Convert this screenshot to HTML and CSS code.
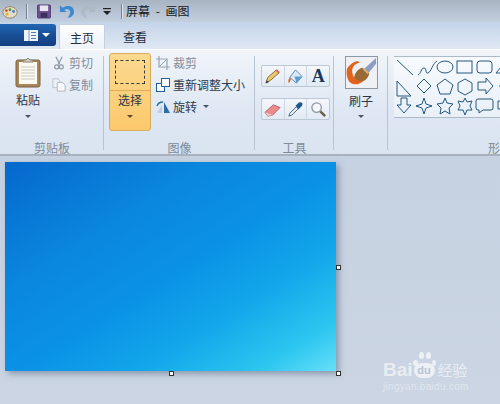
FILE: index.html
```html
<!DOCTYPE html>
<html lang="zh">
<head>
<meta charset="utf-8">
<title>屏幕 - 画图</title>
<link rel="stylesheet" href="styles.css">
</head>
<body>
<div class="app">
  <header class="titlebar">
    <svg class="qa palette" viewBox="0 0 18 16"><ellipse cx="9" cy="9" rx="8" ry="6.500" fill="#e6dcc4" stroke="#8b7d62"/><circle cx="5" cy="7" r="1.600" fill="#d8503c"/><circle cx="9" cy="6" r="1.600" fill="#4a9a4a"/><circle cx="13" cy="8" r="1.600" fill="#3f7fd0"/><circle cx="5.500" cy="11" r="1.600" fill="#e0b030"/></svg>
    <span class="qsep"></span>
    <svg class="qa save" viewBox="0 0 15 15"><rect x=".5" y=".5" width="14" height="14" rx="1" fill="#6a4f8e" stroke="#54407a"/><rect x="3" y="1" width="9" height="6" fill="#e9e6f0"/><rect x="4" y="9" width="7" height="5" fill="#3b2f5c"/></svg>
    <svg class="qa undo" viewBox="0 0 16 16"><path d="M1 2v7h7L5.800 6.800C8 5 12 6 12 9c0 2-1 4-3 6 4 .5 7-2.500 7-6.500C16 3 9.500 .8 4 4.500z" fill="#3a8ad0"/></svg>
    <svg class="qa redo" viewBox="0 0 16 16"><path d="M15 2v7H8l2.200-2.200C8 5 4 6 4 9c0 2 1 4 3 6-4 .5-7-2.500-7-6.500C0 3 6.500 .8 12 4.500z" fill="#aeb9c5"/></svg>
    <svg class="qa more" viewBox="0 0 8 7"><rect y="0" width="8" height="1.200" fill="#222"/><path d="M0 3h8L4 7z" fill="#222"/></svg>
    <span class="qsep second"></span>
    <span class="wintitle">屏幕 - 画图</span>
  </header>

  <nav class="tabs">
    <div class="filebtn">
      <svg class="fileicon" viewBox="0 0 14 11"><rect width="14" height="11" fill="#eef3fa"/><path d="M5 0v11" stroke="#7f9cc0"/><path d="M7 2.500h5M7 5.500h5M7 8.500h5" stroke="#5a7ba8"/></svg>
      <span class="filecaret"></span>
    </div>
    <div class="tab active">主页</div>
    <div class="tab">查看</div>
  </nav>

  <section class="ribbon">
    <div class="group g-clip">
      <div class="group-body clip-body">
        <div class="bigtool paste">
          <svg class="paste-icon" viewBox="0 0 26 31"><rect x="1" y="3" width="24" height="27" rx="2" fill="#a9865c" stroke="#7b5e3c"/><rect x="4" y="5" width="18" height="22" fill="#fbfaf2"/><path d="M6 10h14M6 13h14M6 16h14M6 19h14M6 22h14" stroke="#c8c8bc"/><path d="M8 5V3h3l2-2 2 2h3v2z" fill="#d6d2c4" stroke="#88806c"/></svg>
          <span class="biglabel">粘贴</span>
          <span class="caret"></span>
        </div>
        <div class="smalls">
          <div class="small muted">
            <svg class="ico" viewBox="0 0 14 18"><path d="M3 1l5 10M11 1L6 11" stroke="#8e98a6" stroke-width="1.600" fill="none"/><circle cx="4" cy="14" r="2.500" fill="none" stroke="#8e98a6" stroke-width="1.500"/><circle cx="10" cy="14" r="2.500" fill="none" stroke="#8e98a6" stroke-width="1.500"/></svg>
            <span>剪切</span>
          </div>
          <div class="small muted">
            <svg class="ico" viewBox="0 0 16 16"><path d="M1 1h6l2 2v8H1z" fill="#eef2f7" stroke="#b4bdc8"/><path d="M6 5h6l3 3v7H6z" fill="#f6f8fb" stroke="#a6b0bc"/></svg>
            <span>复制</span>
          </div>
        </div>
      </div>
      <div class="group-label">剪贴板</div>
    </div>

    <div class="group g-image">
      <div class="group-body image-body">
        <div class="select">
          <div class="select-top"><span class="marquee"></span></div>
          <div class="select-bottom">
            <span class="biglabel">选择</span>
            <span class="caret"></span>
          </div>
        </div>
        <div class="smalls wide">
          <div class="small muted">
            <svg class="ico" viewBox="0 0 14 14"><path d="M3 0v11h11M0 3h11v11" fill="none" stroke="#9aa4b2" stroke-width="1.200"/><path d="M3 11l8-8" stroke="#9aa4b2"/></svg>
            <span>裁剪</span>
          </div>
          <div class="small">
            <svg class="ico" viewBox="0 0 14 14"><rect x=".5" y="5.500" width="8" height="8" fill="#fff" stroke="#1f5f9e"/><rect x="5.500" y=".5" width="8" height="8" fill="#fff" stroke="#1f5f9e"/></svg>
            <span>重新调整大小</span>
          </div>
          <div class="small">
            <svg class="ico" viewBox="0 0 14 14"><path d="M8 2l6 11H8z" fill="#2d6ea8"/><path d="M6 13H1l5-8z" fill="#bcd0e4"/><path d="M1 6c1-3 3-4 6-4" stroke="#2d6ea8" fill="none" stroke-width="1.300"/></svg>
            <span>旋转</span>
            <span class="caret inline"></span>
          </div>
        </div>
      </div>
      <div class="group-label">图像</div>
    </div>

    <div class="group g-tools">
      <div class="group-body tools-body">
        <div class="toolrow">
          <div class="toolcell"><svg viewBox="0 0 18 18"><path d="M2 16l2-6L13 2l3 3-9 8z" fill="#eec866" stroke="#77694a"/><path d="M13 2l3 3" stroke="#d86a5c" stroke-width="2"/><path d="M2 16l1-3 2 2z" fill="#333"/></svg></div>
          <div class="toolcell"><svg viewBox="0 0 18 18"><path d="M9 2l7 7-6 7-7-6z" fill="#dbe9f6" stroke="#5a87b0"/><path d="M8 9l8 0-6 7z" fill="#5b9bd5"/><path d="M3 10c-2 2-2 5-1 6 1-1 2-3 2-5z" fill="#d8672c"/></svg></div>
          <div class="toolcell letter">A</div>
        </div>
        <div class="toolrow">
          <div class="toolcell"><svg viewBox="0 0 18 18"><path d="M1 12l9-8 7 3-8 8-5 1z" fill="#ec8a8c" stroke="#b46668"/><path d="M1 12l6 2 2 1-5 1z" fill="#f3c6c6"/></svg></div>
          <div class="toolcell"><svg viewBox="0 0 18 18"><path d="M2 16l1-3 7-7 2 2-7 7z" fill="#eef5fb" stroke="#3b5f82"/><path d="M9 5l3-3c1-1 3-1 4 0s0 3-1 4l-3 3z" fill="#20588e"/></svg></div>
          <div class="toolcell"><svg viewBox="0 0 18 18"><circle cx="7" cy="7" r="5" fill="#f4f8fc" stroke="#8d9aa6" stroke-width="1.400"/><path d="M11 11l5 5" stroke="#6b5a42" stroke-width="2.400"/></svg></div>
        </div>
      </div>
      <div class="group-label">工具</div>
    </div>

    <div class="group g-brush">
      <div class="group-body brush-body">
        <div class="brushbox"><svg viewBox="0 0 32 32"><rect width="32" height="32" fill="#eef0f3"/><path d="M31 1L18 13l4 5L31 7z" fill="#8a9cc8"/><path d="M17 11c-5 1-9 6-9 14 5 2 14 1 16-8z" fill="#9b6a34"/><path d="M18 12l5 5" stroke="#d9b37a" stroke-width="2"/><path d="M1 12C7 4 13 3 14 6 8 7 5 12 7 18c1 4 5 7 11 7-6 5-14 4-16-2-1-3-2-7-1-11z" fill="#e2641c"/></svg></div>
        <span class="biglabel">刷子</span>
        <span class="caret"></span>
      </div>
      <div class="group-label">&nbsp;</div>
    </div>

    <div class="group g-shapes">
      <div class="gallery">
        <svg viewBox="0 0 106 60" class="shapes" fill="none" stroke="#25587e" stroke-width="1">
          <path d="M3 3l16 15"/>
          <path d="M24 18c3-1 3-7 6-7s1 6 4 5 5-10 9-12"/>
          <ellipse cx="51" cy="10" rx="8" ry="6"/>
          <rect x="63" y="4" width="15" height="12"/>
          <rect x="83" y="4" width="15" height="12" rx="3"/>
          <path d="M102 16l5-6v6z"/>
          <path d="M3 24v15h14z"/>
          <path d="M30 22l7 7-7 7-7-7z"/>
          <path d="M51 22l8 6-3 9H46l-3-9z"/>
          <path d="M71 22l7 4v8l-7 4-7-4v-8z"/>
          <path d="M84 25h8v-4l7 8-7 8v-4h-8z"/>
          <path d="M105 29h4"/>
          <path d="M7 41h6v7h4l-7 8-7-8h4z"/>
          <path d="M30 41l2 6 6 2-6 2-2 6-2-6-6-2 6-2z"/>
          <path d="M51 41l2 5 6 1-4 4 1 6-5-3-5 3 1-6-4-4 6-1z"/>
          <path d="M71 41l2 4 5-1-2 5 2 4-5 0-2 5-2-5-5 0 2-4-2-5 5 1z"/>
          <path d="M85 42h12a2 2 0 0 1 2 2v7a2 2 0 0 1-2 2h-8l-4 3v-3h-1a2 2 0 0 1-2-2v-7a2 2 0 0 1 2-2z"/>
          <path d="M104 44h6v8h-6z"/>
        </svg>
      </div>
      <div class="group-label shapes-label">形</div>
    </div>
  </section>

  <main class="canvas">
    <div class="picture">
      <span class="handle h-right"></span>
      <span class="handle h-bottom"></span>
      <span class="handle h-corner"></span>
    </div>
  </main>

  <div class="watermark">
    <div class="wm-top">
      <span class="wm-bai">Bai</span>
      <span class="wm-paw">
        <span class="toe t1"></span><span class="toe t2"></span><span class="toe t3"></span><span class="toe t4"></span>
        <span class="pad">du</span>
      </span>
      <span class="wm-cn">经验</span>
    </div>
    <div class="wm-url">jingyan.baidu.com</div>
  </div>
</div>
</body>
</html>
```

FILE: styles.css
```css
* { box-sizing: border-box; }
html, body { margin: 0; padding: 0; }
body {
  width: 500px;
  height: 404px;
  overflow: hidden;
  font-family: "Noto Sans CJK SC", "Noto Sans", sans-serif;
  font-size: 12px;
  color: #2c3644;
}
.app {
  position: relative;
  display: flex;
  flex-direction: column;
  width: 500px;
  height: 404px;
  background: #c9d3e2;
}

/* title bar */
.titlebar {
  display: flex;
  align-items: center;
  flex: none;
  height: 22px;
  padding-left: 2px;
  background: linear-gradient(#a9b4c2, #c2cfdf);
}
.qa { flex: none; display: block; }
.palette { width: 16px; height: 15px; }
.qsep { width: 1px; height: 15px; margin-left: 8px; background: #76818f; box-shadow: 1px 0 0 #dde5ef; }
.save { width: 14px; height: 15px; margin-left: 10px; }
.undo { width: 15px; height: 16px; margin-left: 8px; }
.redo { width: 15px; height: 16px; margin-left: 7px; }
.more { width: 8px; height: 7px; margin-left: 7px; }
.qsep.second { margin-left: 10px; }
.wintitle { margin-left: 4px; font-size: 12px; word-spacing: 3px; color: #16181c; line-height: 16px; }

/* tabs */
.tabs {
  display: flex;
  align-items: flex-end;
  flex: none;
  height: 27px;
  background: linear-gradient(#c4d4e8, #dfe8f4);
}
.filebtn {
  display: flex;
  align-items: center;
  justify-content: flex-end;
  gap: 4px;
  width: 56px;
  height: 22px;
  margin-bottom: 3px;
  padding-right: 6px;
  background: linear-gradient(#2166b4, #184f96 50%, #123f80);
  border-radius: 0 3px 3px 0;
}
.fileicon { width: 14px; height: 11px; }
.filecaret { width: 0; height: 0; border: 4px solid transparent; border-top: 4px solid #fff; border-bottom: 0; }
.tab {
  width: 60px;
  height: 25px;
  text-align: center;
  line-height: 25px;
  font-size: 12px;
  color: #222c3a;
}
.tab.active {
  width: 46px;
  margin-left: 3px;
  background: linear-gradient(#fdfeff, #eef3f9);
  border: 1px solid #c3cfdd;
  border-bottom: 0;
  border-radius: 2px 2px 0 0;
}

/* ribbon */
.ribbon {
  display: flex;
  flex: none;
  height: 107px;
  overflow: hidden;
  background: linear-gradient(#f1f5fa, #dee7f3 60%, #dae4f1);
  border-top: 1px solid #fff;
  border-bottom: 2px solid #a8b2bf;
}
.group {
  position: relative;
  display: flex;
  flex-direction: column;
  flex: none;
  height: 100%;
  padding-top: 3px;
}
.group::after {
  content: "";
  position: absolute;
  right: 0;
  top: 6px;
  bottom: 4px;
  width: 1px;
  background: #b8c4d2;
}
.group-body { flex: none; height: 87px; }
.group-label {
  height: 16px;
  line-height: 16px;
  text-align: center;
  color: #7d8a9a;
  font-size: 12px;
}
.g-clip { width: 104px; }
.g-image { width: 151px; }
.g-tools { width: 79px; }
.g-brush { width: 54px; }
.g-shapes { flex: 1; min-width: 0; padding-left: 6px; }
.g-shapes::after { display: none; }

.clip-body, .image-body { display: flex; }
.bigtool, .brush-body {
  display: flex;
  flex-direction: column;
  align-items: center;
}
.paste { width: 52px; padding-top: 4px; padding-left: 4px; }
.paste-icon { width: 26px; height: 31px; }
.biglabel { font-size: 12px; line-height: 16px; color: #2c3644; }
.paste .biglabel { margin-top: 4px; }
.caret {
  display: block;
  width: 0;
  height: 0;
  margin-top: 7px;
  border: 3px solid transparent;
  border-top: 3px solid #4a5562;
  border-bottom: 0;
}
.caret.inline { margin: 0 0 0 3px; }

.smalls { display: flex; flex-direction: column; gap: 5px; padding-top: 1px; }
.small { display: flex; align-items: center; gap: 3px; height: 17px; white-space: nowrap; color: #2c3a4e; }
.small.muted { color: #818c9b; }
.ico { flex: none; width: 14px; height: 14px; display: block; }
.smalls.wide { margin-left: 5px; }

.select {
  flex: none;
  display: flex;
  flex-direction: column;
  align-items: center;
  width: 42px;
  height: 78px;
  margin-left: 5px;
  border: 1px solid #d6ad5e;
  border-radius: 3px;
  background: linear-gradient(#fbd990, #fcc96c);
}
.select-top {
  display: flex;
  align-items: center;
  justify-content: center;
  width: 100%;
  height: 37px;
  border-bottom: 1px solid #e0ae5a;
}
.marquee { width: 30px; height: 24px; border: 1px dashed #3c3a34; }
.select-bottom { display: flex; flex-direction: column; align-items: center; padding-top: 1px; }
.select-bottom .caret { margin-top: 7px; border-top-color: #5c4a28; }

.tools-body { display: flex; flex-direction: column; gap: 11px; padding: 12px 0 0 6px; }
.toolrow {
  display: flex;
  width: 69px;
  height: 22px;
  border: 1px solid #bcc8d6;
  border-radius: 2px;
  background: linear-gradient(#f4f7fb, #e2eaf4);
}
.toolcell {
  display: flex;
  align-items: center;
  justify-content: center;
  flex: 1;
  border-right: 1px solid #cdd7e3;
}
.toolcell:last-child { border-right: 0; }
.toolcell svg { width: 17px; height: 17px; }
.letter {
  font-family: "Liberation Serif", serif;
  font-weight: 700;
  font-size: 18px;
  line-height: 20px;
  color: #17365c;
}

.brush-body { width: 54px; padding-top: 3px; }
.brushbox { width: 33px; height: 33px; border: 1px solid #8e98a4; overflow: hidden; }
.brushbox svg { display: block; width: 100%; height: 100%; }
.brush-body .biglabel { margin-top: 4px; }
.brush-body .caret { margin-top: 6px; }

.gallery {
  flex: none;
  height: 87px;
  padding-top: 4px;
  overflow: hidden;
}
.shapes {
  display: block;
  width: 106px;
  height: 60px;
  background: linear-gradient(#f7fafd, #e9f0f8);
  outline: 1px solid #aeb9c6;
}
.shapes-label { text-align: left; padding-left: 94px; white-space: nowrap; }

/* canvas */
.canvas {
  flex: 1;
  min-height: 0;
  padding: 6px 0 0 5px;
  background: linear-gradient(#c6d1e1, #cbd5e3);
}
.picture {
  position: relative;
  width: 331px;
  height: 209px;
  background:
    linear-gradient(to bottom right, #0568cc 0%, #0a86de 30%, #0a92e6 52%, #12a6ea 70%, #2cc6f0 88%, #66dff8 100%);
  box-shadow: 3px 3px 6px rgba(90, 105, 130, .55);
}
.handle {
  position: absolute;
  width: 5px;
  height: 5px;
  background: #fff;
  border: 1px solid #333;
}
.h-right { left: 331px; top: 103px; }
.h-bottom { left: 164px; top: 209px; }
.h-corner { left: 331px; top: 209px; }

/* watermark */
.watermark {
  position: absolute;
  left: 383px;
  top: 351px;
  width: 90px;
  color: rgba(255, 255, 255, .62);
}
.wm-top { display: flex; align-items: flex-end; height: 30px; }
.wm-bai {
  font-family: "Liberation Sans", sans-serif;
  font-weight: 700;
  font-size: 19px;
  line-height: 23px;
}
.wm-paw { position: relative; width: 23px; height: 30px; margin-left: 0; flex: none; }
.toe { position: absolute; background: rgba(255, 255, 255, .65); border-radius: 50%; }
.t1 { left: 0; top: 9px; width: 5px; height: 6px; }
.t2 { left: 6px; top: 1px; width: 5px; height: 7px; }
.t3 { left: 13px; top: 1px; width: 5px; height: 7px; }
.t4 { left: 19px; top: 9px; width: 4px; height: 6px; }
.pad {
  position: absolute;
  left: 1px;
  top: 12px;
  width: 21px;
  height: 15px;
  border-radius: 8px;
  background: rgba(255, 255, 255, .65);
  color: #b6c3d6;
  font-family: "Liberation Sans", sans-serif;
  font-weight: 700;
  font-size: 11px;
  line-height: 15px;
  text-align: center;
}
.wm-cn { margin-left: 2px; font-size: 15px; line-height: 22px; white-space: nowrap; }
.wm-url {
  font-family: "Liberation Sans", sans-serif;
  font-size: 10px;
  line-height: 12px;
  letter-spacing: .3px;
  color: rgba(255, 255, 255, .45);
  white-space: nowrap;
}
```
